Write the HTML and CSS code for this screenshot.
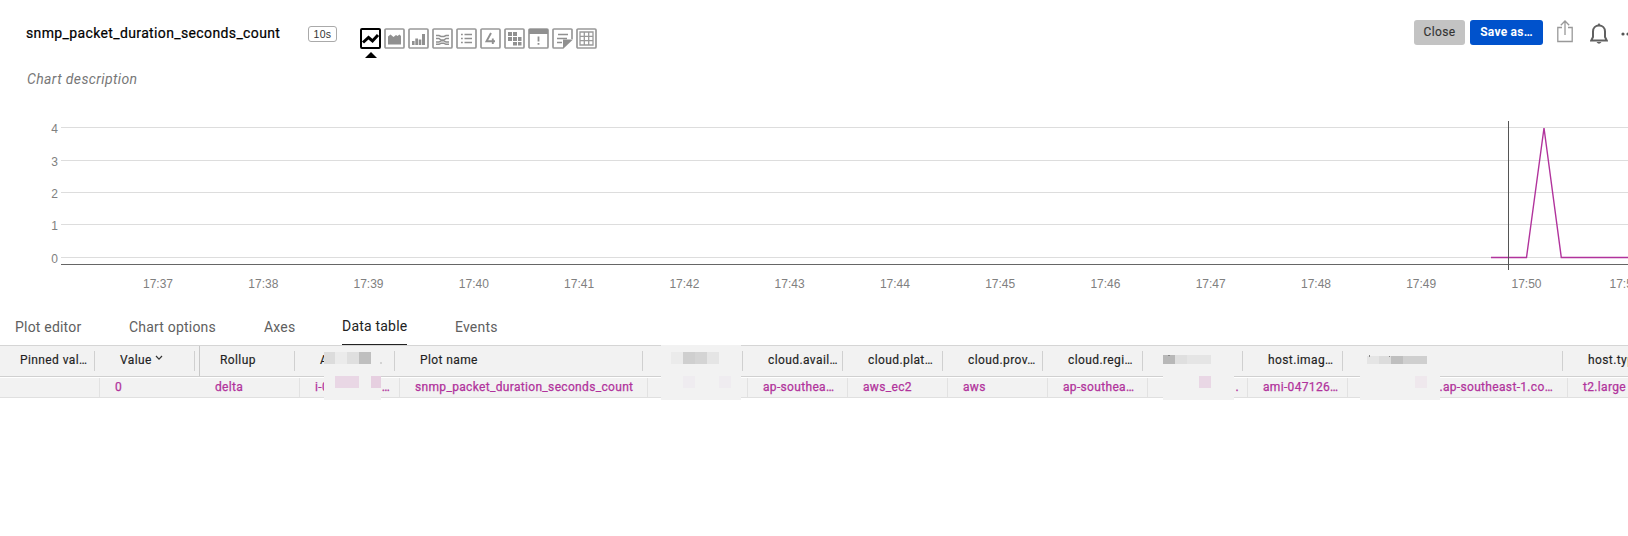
FILE: index.html
```html
<!DOCTYPE html>
<html lang="en">
<head>
<meta charset="utf-8">
<title>snmp_packet_duration_seconds_count</title>
<link rel="stylesheet" href="styles.css">
</head>
<body>
<header class="topbar">
  <h1 class="title">snmp_packet_duration_seconds_count</h1>
  <span class="badge">10s</span>
  <nav class="types">
    <svg class="type active" viewBox="0 0 21 21"><rect x="1" y="1" width="19" height="19" rx="1"/><path class="thick" d="M3 14.500l5.500-5 4 3.500 5.500-6"/></svg>
    <svg class="type" viewBox="0 0 21 21"><rect x="1" y="1" width="19" height="19" rx="1"/><path class="fill" d="M4 16.500V8.500l2.500-2 3 2.500 2.500-2 1.500 1 2-1.500 1.500 1.500v8.500z"/></svg>
    <svg class="type" viewBox="0 0 21 21"><rect x="1" y="1" width="19" height="19" rx="1"/><path class="fill" d="M4 13h2.600v4H4zM7.300 10.500h2.700V17H7.300zM10.700 11.500h2.600V17h-2.600zM14 6h3v11h-3z"/></svg>
    <svg class="type" viewBox="0 0 21 21"><rect x="1" y="1" width="19" height="19" rx="1"/><path class="line" d="M4 7.500h3l2 1h3l2-1h3M4 10.500h3l2 1.500h3l2-1.500h3M4 14h3l2-1.200h3L14 14h3M4 16.300h3l2-1h3l2 1h3"/></svg>
    <svg class="type" viewBox="0 0 21 21"><rect x="1" y="1" width="19" height="19" rx="1"/><path class="line" d="M5 6.500h1.800M8.500 6.500H16M5 10.500h1.800M8.500 10.500H16M5 14.500h1.800M8.500 14.500H16"/></svg>
    <svg class="type" viewBox="0 0 21 21"><rect x="1" y="1" width="19" height="19" rx="1"/><path class="line four" d="M12.800 16V10.500M11 5L6.500 13.200H15"/></svg>
    <svg class="type" viewBox="0 0 21 21"><rect x="1" y="1" width="19" height="19" rx="1"/><path class="fill" d="M4 4h4v4H4zM9 4h4v4H9zM4 9h4v4H4zM9 9h4v4H9zM14 9h3.500v4H14zM9 14h4v3.500H9zM14 14h3.500v3.500H14z"/></svg>
    <svg class="type" viewBox="0 0 21 21"><rect x="1" y="1" width="19" height="19" rx="1"/><path class="fill" d="M1 1h19v5H1zM9.600 8.500h1.800v5H9.600zM9.600 15h1.800v1.800H9.600z"/></svg>
    <svg class="type" viewBox="0 0 21 21"><path class="edge" d="M20 11V2q0-1-1-1H2Q1 1 1 2v17q0 1 1 1h9"/><path class="line" d="M6 6.500h10M5 10.500h10M5 14.500h5"/><path class="fill" d="M11 21v-9.500h10z"/></svg>
    <svg class="type" viewBox="0 0 21 21"><rect x="1" y="1" width="19" height="19" rx="1"/><path class="grid" d="M4 4h13v13H4zM8.300 4v13M12.700 4v13M4 8.300h13M4 12.700h13"/></svg>
  </nav>
  <div class="actions">
    <button class="btn close">Close</button>
    <button class="btn save">Save as…</button>
    <svg class="share" viewBox="0 0 16 23"><path d="M5 7.500H.8v14h14.400v-14H11M8 15V1.500M3.800 5.200L8 1l4.200 4.200"/></svg>
    <svg class="bell" viewBox="0 0 18 22"><path d="M9 2.500c-3.500 0-6 2.600-6 6v5.500L1.200 17.500h15.600L15 14V8.500c0-3.400-2.500-6-6-6z"/><path class="knob" d="M7.500 2L9 0l1.500 2zM6.500 19h5Q9 22.500 6.500 19z"/></svg>
    <svg class="dots" viewBox="0 0 14 4"><circle cx="2" cy="2" r="1.600"/><circle cx="7" cy="2" r="1.600"/><circle cx="12" cy="2" r="1.600"/></svg>
  </div>
</header>
<p class="description">Chart description</p>
<svg class="chart" viewBox="0 0 1628 190">
  <path class="gridline" d="M61 17.500H1628M61 50.500H1628M61 82.500H1628M61 114.500H1628M61 147.500H1628"/>
  <path class="axis" d="M61 154.500H1628"/>
  <path class="series" d="M1491 147.500H1526.500L1544 18L1561.300 147.500H1628"/>
  <path class="cursor" d="M1508.500 11V160"/>
  <g class="ylab"><text x="58" y="23">4</text><text x="58" y="56">3</text><text x="58" y="88">2</text><text x="58" y="120">1</text><text x="58" y="153">0</text></g>
  <g class="xlab"><text x="158" y="178">17:37</text><text x="263.300" y="178">17:38</text><text x="368.500" y="178">17:39</text><text x="473.800" y="178">17:40</text><text x="579.100" y="178">17:41</text><text x="684.400" y="178">17:42</text><text x="789.600" y="178">17:43</text><text x="894.900" y="178">17:44</text><text x="1000.200" y="178">17:45</text><text x="1105.400" y="178">17:46</text><text x="1210.700" y="178">17:47</text><text x="1316" y="178">17:48</text><text x="1421.200" y="178">17:49</text><text x="1526.500" y="178">17:50</text><text x="1624.500" y="178">17:51</text></g>
</svg>
<nav class="tabs">
  <a class="tab t1">Plot editor</a><a class="tab t2">Chart options</a><a class="tab t3">Axes</a><a class="tab current">Data table</a><a class="tab t5">Events</a>
</nav>
<section class="table">
  <div class="row head">
    <span class="cell">Pinned val…</span><span class="cell pinned">Value<svg class="chev" viewBox="0 0 8 6"><path d="M1 1l3 3.200L7 1"/></svg></span><span class="cell">Rollup</span><span class="cell">A</span><span class="cell">Plot name</span><span class="cell"></span><span class="cell">cloud.avail…</span><span class="cell">cloud.plat…</span><span class="cell">cloud.prov…</span><span class="cell">cloud.regi…</span><span class="cell"></span><span class="cell">host.imag…</span><span class="cell"></span><span class="cell">host.type</span>
  </div>
  <div class="row data">
    <span class="cell"></span><span class="cell open">0</span><span class="cell">delta</span><span class="cell split"><i>i-0</i><i>…</i></span><span class="cell">snmp_packet_duration_seconds_count</span><span class="cell"></span><span class="cell">ap-southea…</span><span class="cell">aws_ec2</span><span class="cell">aws</span><span class="cell">ap-southea…</span><span class="cell tail">.</span><span class="cell">ami-047126…</span><span class="cell tail host">.ap-southeast-1.co…</span><span class="cell">t2.large</span>
  </div>
  <svg class="masks" viewBox="0 345 1628 55" shape-rendering="crispEdges">
    <path fill="#f2f2f2" d="M324 348h57v52h-57zM661 345h80v55h-80zM1163 376h71v24h-71zM1360 376h80v24h-80z"/>
    <path fill="#dcdcdc" d="M324 352h11v12h-11zM1379 356h12v8h-12z"/>
    <path fill="#ebebeb" d="M335 352h12v12h-12zM671 352h12v12h-12z"/>
    <path fill="#dfdfdf" d="M347 352h12v12h-12zM1175 355h12v9h-12z"/>
    <path fill="#bfbfbf" d="M359 352h12v12h-12zM1391 356h12v8h-12z"/>
    <path fill="#cfcfcf" d="M683 352h12v12h-12zM1403 356h24v8h-24z"/>
    <path fill="#d4d4d4" d="M695 352h12v12h-12zM380 362h2v2h-2z"/>
    <path fill="#e5e5e5" d="M707 352h12v12h-12zM1187 355h24v9h-24zM1367 356h12v8h-12z"/>
    <path fill="#b8b8b8" d="M1163 355h12v9h-12z"/>
    <path fill="#888" d="M1168 355h2v1h-2zM1369 355h1v2h-1zM1389 356h1v1h-1z"/>
    <path fill="#e9d7e5" d="M335 376h24v12h-24zM1199 376h12v12h-12z"/>
    <path fill="#e6cfe0" d="M371 376h10v12h-10z"/>
    <path fill="#efecf0" d="M683 376h12v12h-12zM719 376h12v12h-12z"/>
    <path fill="#efe8ed" d="M1415 376h12v12h-12z"/>
  </svg>
</section>
</body>
</html>
```
FILE: styles.css
```css
* { box-sizing: border-box; }
body { margin: 0; width: 1628px; height: 536px; overflow: hidden; background: #fff; font-family: Roboto, "Liberation Sans", sans-serif; }

.topbar { display: flex; align-items: flex-start; height: 64px; padding-left: 26px; }
.title { width: 282px; margin: 23px 0 0; font-size: 14px; line-height: 20px; font-weight: 400; letter-spacing: .37px; color: #000; -webkit-text-stroke: .2px #000; white-space: nowrap; }
.badge { width: 29px; height: 16px; margin-top: 26px; border: 1px solid #aaa; border-radius: 3px; font: 10.500px/15px "Liberation Sans", sans-serif; letter-spacing: .3px; text-align: center; color: #333; }
.types { display: flex; gap: 3px; margin: 27.500px 0 0 23px; }
.type { width: 21px; height: 21px; overflow: visible; fill: none; stroke: #999; stroke-width: 1.700; }
.type.active { stroke: #000; stroke-width: 2; }
.type .thick { stroke-width: 3; }
.type .fill { fill: #909090; stroke: none; }
.type .line { stroke: #909090; stroke-width: 1.400; }
.type .four { stroke-width: 1.900; }
.type .grid { stroke-width: 1.300; }
.types::after { content: ""; position: absolute; left: 365px; top: 52px; border: 6px solid transparent; border-top: 0; border-bottom: 6px solid #000; }

.actions { display: flex; margin: 20px 0 0 auto; width: 214px; flex: none; }
.btn { height: 25px; padding: 0; border: 0; border-radius: 3px; font: 400 12px/25px Roboto, sans-serif; letter-spacing: .35px; -webkit-text-stroke: .15px currentColor; flex: none; }
.close { width: 51px; background: #c3c3c3; color: #333; }
.save { width: 73px; margin-left: 5px; background: #0052cc; color: #fff; font-weight: 700; letter-spacing: .25px; -webkit-text-stroke: 0; }
.share { width: 16px; height: 23px; margin-left: 14px; fill: none; stroke: #999; stroke-width: 1.300; flex: none; }
.bell { width: 18px; height: 22px; margin: 3px 0 0 17px; fill: none; stroke: #606060; stroke-width: 2; flex: none; }
.bell .knob { fill: #606060; stroke: none; }
.dots { width: 14px; height: 4px; margin: 12px 0 0 13px; fill: #555; flex: none; }

.description { margin: 0; height: 46px; padding: 5px 0 0 27px; font-size: 14px; line-height: 20px; font-style: italic; letter-spacing: .38px; color: #777; }

.chart { display: block; width: 1628px; height: 190px; fill: none; font: 12px "Liberation Sans", sans-serif; }
.gridline { stroke: #ddd; }
.axis { stroke: #666; }
.series { stroke: #b1339c; stroke-width: 1.400; }
.cursor { stroke: #555; }
.ylab, .xlab { fill: #808080; text-anchor: middle; }
.ylab { text-anchor: end; }

.tabs { display: flex; height: 45px; padding: 17px 0 0 15px; font-size: 14px; line-height: 20px; letter-spacing: .2px; color: #606060; }
.tab { white-space: nowrap; height: 28px; }
.t1 { width: 114px; }
.t2 { width: 135px; }
.t3 { width: 78px; }
.current { width: 65px; margin-top: -1px; height: 29px; border-bottom: 1px solid #222; color: #222; }
.t5 { margin-left: 48px; }

.table { position: relative; border-top: 1px solid #d5d5d5; font-size: 12px; }
.row { display: grid; width: 1700px; grid-template-columns: 100px 100px 100px 100px 248px 100px 100px 100px 100px 100px 100px 100px 220px 132px; background: #f2f2f2; }
.cell { white-space: nowrap; overflow: hidden; }
.head { height: 31px; border-bottom: 1px solid #d0d0d0; color: #222; letter-spacing: .4px; -webkit-text-stroke: .15px #222; }
.head .cell { position: relative; padding-left: 20px; line-height: 29px; }
.head .cell::after { content: ""; position: absolute; right: 5px; top: 5px; width: 1px; height: 20px; background: #d0d0d0; }
.pinned { border-right: 1px solid #c8c8c8; }
.head .pinned::after { right: 4px; }
.chev { width: 8px; height: 6px; margin: 0 0 3px 3px; fill: none; stroke: #333; stroke-width: 1.200; }
.data { margin-top: 1px; height: 20px; border-bottom: 1px solid #e0e0e0; color: #b1339c; letter-spacing: .33px; -webkit-text-stroke: .25px #b1339c; }
.data .cell { padding-left: 15px; line-height: 19px; border-right: 1px solid #e2e2e2; }
.data .open { border-right-color: transparent; }
.data .split { display: flex; justify-content: space-between; padding-right: 9px; }
.split i { font-style: normal; }
.data .tail { padding: 0 8px 0 0; text-align: right; }
.data .host { padding-right: 14px; }
.masks { position: absolute; left: 0; top: -1px; width: 1628px; height: 55px; }
```
